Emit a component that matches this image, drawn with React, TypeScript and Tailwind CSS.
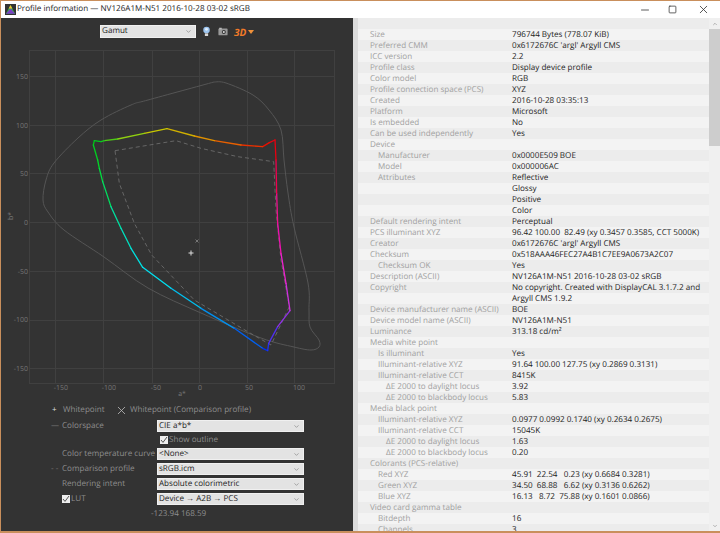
import { ChevronDown, Minus, Square, X } from "lucide-react";

type Row = { label?: string; indent?: 0 | 1 | 2; value?: string };

const rows: Row[] = [
  { label: "Size", value: "796744 Bytes (778.07 KiB)" },
  { label: "Preferred CMM", value: "0x6172676C 'argl' Argyll CMS" },
  { label: "ICC version", value: "2.2" },
  { label: "Profile class", value: "Display device profile" },
  { label: "Color model", value: "RGB" },
  { label: "Profile connection space (PCS)", value: "XYZ" },
  { label: "Created", value: "2016-10-28 03:35:13" },
  { label: "Platform", value: "Microsoft" },
  { label: "Is embedded", value: "No" },
  { label: "Can be used independently", value: "Yes" },
  { label: "Device" },
  { label: "Manufacturer", indent: 1, value: "0x0000E509 BOE" },
  { label: "Model", indent: 1, value: "0x000006AC" },
  { label: "Attributes", indent: 1, value: "Reflective" },
  { value: "Glossy" },
  { value: "Positive" },
  { value: "Color" },
  { label: "Default rendering intent", value: "Perceptual" },
  { label: "PCS illuminant XYZ", value: "96.42 100.00  82.49 (xy 0.3457 0.3585, CCT 5000K)" },
  { label: "Creator", value: "0x6172676C 'argl' Argyll CMS" },
  { label: "Checksum", value: "0x518AAA46FEC27A4B1C7EE9A0673A2C07" },
  { label: "Checksum OK", indent: 1, value: "Yes" },
  { label: "Description (ASCII)", value: "NV126A1M-N51 2016-10-28 03-02 sRGB" },
  { label: "Copyright", value: "No copyright. Created with DisplayCAL 3.1.7.2 and" },
  { value: "Argyll CMS 1.9.2" },
  { label: "Device manufacturer name (ASCII)", value: "BOE" },
  { label: "Device model name (ASCII)", value: "NV126A1M-N51" },
  { label: "Luminance", value: "313.18 cd/m²" },
  { label: "Media white point" },
  { label: "Is illuminant", indent: 1, value: "Yes" },
  { label: "Illuminant-relative XYZ", indent: 1, value: "91.64 100.00 127.75 (xy 0.2869 0.3131)" },
  { label: "Illuminant-relative CCT", indent: 1, value: "8415K" },
  { label: "ΔE 2000 to daylight locus", indent: 2, value: "3.92" },
  { label: "ΔE 2000 to blackbody locus", indent: 2, value: "5.83" },
  { label: "Media black point" },
  { label: "Illuminant-relative XYZ", indent: 1, value: "0.0977 0.0992 0.1740 (xy 0.2634 0.2675)" },
  { label: "Illuminant-relative CCT", indent: 1, value: "15045K" },
  { label: "ΔE 2000 to daylight locus", indent: 2, value: "1.63" },
  { label: "ΔE 2000 to blackbody locus", indent: 2, value: "0.20" },
  { label: "Colorants (PCS-relative)" },
  { label: "Red XYZ", indent: 1, value: "45.91  22.54   0.23 (xy 0.6684 0.3281)" },
  { label: "Green XYZ", indent: 1, value: "34.50  68.88   6.62 (xy 0.3136 0.6262)" },
  { label: "Blue XYZ", indent: 1, value: "16.13   8.72  75.88 (xy 0.1601 0.0866)" },
  { label: "Video card gamma table" },
  { label: "Bitdepth", indent: 1, value: "16" },
  { label: "Channels", indent: 1, value: "3" },
];

const W = 352;
const H = 359;
// chart coordinates below are window pixels, the svg starts at y 44
const oy = 44;

type Stop = [number, number, string];

// zoom coords of the gamut edge, from the crop at (60,110) 3x
const gamut: Stop[] = [
  [100, 92, "#00c818"],
  [97, 105, "#00d020"],
  [110, 150, "#00d828"],
  [115, 175, "#00e040"],
  [125, 215, "#00e060"],
  [150, 290, "#00e0a0"],
  [180, 355, "#00e0c0"],
  [210, 415, "#00e0e0"],
  [245, 472, "#00e0f0"],
  [330, 535, "#00c0f0"],
  [420, 595, "#0090f0"],
  [520, 655, "#0060f0"],
  [605, 715, "#0030f0"],
  [620, 722, "#2030f0"],
  [623, 700, "#5030f0"],
  [650, 650, "#9030e8"],
  [687, 602, "#d030e0"],
  [675, 520, "#f020d0"],
  [660, 430, "#f010b0"],
  [650, 340, "#f01090"],
  [647, 250, "#f00050"],
  [645, 150, "#e80010"],
  [642, 90, "#e80010"],
  [625, 98, "#e81000"],
  [605, 110, "#e83000"],
  [540, 105, "#e86000"],
  [460, 92, "#e09000"],
  [400, 78, "#d0b000"],
  [318, 56, "#c8c800"],
  [250, 70, "#90d010"],
  [170, 87, "#50c818"],
  [130, 92, "#18c820"],
  [120, 95, "#00c820"],
  [100, 92, "#00c818"],
];

const dashed = [
  [162, 122], [345, 92], [420, 115], [530, 140], [638, 155], [645, 300], [660, 450],
  [685, 590], [630, 705], [560, 665], [400, 570], [272, 435], [220, 340], [175, 220], [162, 122],
];

const outline = [
  [213, 82], [225, 83], [252, 95], [268, 110], [280, 130], [283, 160], [287, 193], [293, 227],
  [307, 283], [308, 310], [309, 327], [318, 340], [318, 347], [310, 350], [293, 347], [260, 338],
  [200, 313], [147, 288], [103, 257], [63, 230], [47, 212], [42, 200], [45, 180], [53, 163],
  [77, 138], [100, 120], [130, 105], [147, 100], [213, 82],
];

// catmull-rom through the traced points so the curve doesn't look faceted
function smooth(pts: number[][]) {
  let d = `M${pts[0][0]} ${pts[0][1] - oy}`;
  for (let i = 0; i < pts.length - 1; i++) {
    const p0 = pts[Math.max(i - 1, 0)];
    const p1 = pts[i];
    const p2 = pts[i + 1];
    const p3 = pts[Math.min(i + 2, pts.length - 1)];
    const c1x = p1[0] + (p2[0] - p0[0]) / 6;
    const c1y = p1[1] + (p2[1] - p0[1]) / 6 - oy;
    const c2x = p2[0] - (p3[0] - p1[0]) / 6;
    const c2y = p2[1] - (p3[1] - p1[1]) / 6 - oy;
    d += `C${c1x} ${c1y} ${c2x} ${c2y} ${p2[0]} ${p2[1] - oy}`;
  }
  return d;
}

const zx = (x: number) => 60 + x / 3;
const zy = (y: number) => 110 + y / 3 - oy;

const vGrid = [54, 102, 151, 198, 246, 293];
const hGrid = [76, 125, 173, 222, 271, 320, 368];
const xLabels = [
  ["-150", 60], ["-100", 108], ["-50", 155], ["0", 199], ["50", 248], ["100", 298],
] as const;
const yLabels = [
  ["150", 77], ["100", 126], ["50", 174], ["0", 223], ["-50", 272], ["-100", 320], ["-150", 369],
] as const;

function Select({ value, className }: { value: string; className: string }) {
  return (
    <div className={`flex items-center justify-between bg-[#e3e3e3] border border-[#f0f0f0] text-[#222] pl-[1px] pr-[3px] text-[8.1px] leading-none ${className}`}>
      <span>{value}</span>
      <ChevronDown className="w-[7px] h-[7px] text-[#777]" />
    </div>
  );
}

function Check() {
  return (
    <span className="w-[8px] h-[8px] bg-[#eee] flex items-center justify-center shrink-0">
      <svg viewBox="0 0 8 8" className="w-[8px] h-[8px]">
        <path d="M1 4l2 2.4L7 1" fill="none" stroke="#555" strokeWidth="1" />
      </svg>
    </span>
  );
}

function Chart() {
  return (
    <svg width={W} height={H} viewBox={`0 0 ${W} ${H}`} className="block" fontFamily="'Open Sans', sans-serif">
      <rect x="28.5" y={50.5 - oy} width="305" height="333" fill="none" stroke="#404040" />
      {vGrid.map((x) => (
        <line key={x} x1={x + 0.5} x2={x + 0.5} y1={50 - oy} y2={383 - oy} stroke="#404040" />
      ))}
      {hGrid.map((y) => (
        <line key={y} x1="28" x2="333" y1={y + 0.5 - oy} y2={y + 0.5 - oy} stroke="#404040" />
      ))}
      {xLabels.map(([t, x]) => (
        <text key={t} x={x} y={390 - oy} fontSize="7" fill="#777" textAnchor="middle">{t}</text>
      ))}
      {yLabels.map(([t, y]) => (
        <text key={t} x="27" y={y + 2 - oy} fontSize="7" fill="#777" textAnchor="end">{t}</text>
      ))}
      <text x="181" y={396 - oy} fontSize="7" fill="#777" textAnchor="middle">a*</text>
      <text x="0" y="0" fontSize="7" fill="#777" textAnchor="middle" transform={`translate(12 ${216 - oy}) rotate(-90)`}>b*</text>

      <path d={smooth(outline)} fill="none" stroke="#555555" strokeWidth="1" />
      <polyline
        points={dashed.map(([x, y]) => `${zx(x)},${zy(y)}`).join(" ")}
        fill="none"
        stroke="#666666"
        strokeWidth="1"
        strokeDasharray="4 3"
      />
      {gamut.slice(1).map(([x, y], i) => {
        const [px, py, c] = gamut[i];
        return (
          <line key={i} x1={zx(px)} y1={zy(py)} x2={zx(x)} y2={zy(y)} stroke={c} strokeWidth="1.3" strokeLinecap="round" />
        );
      })}
      <path d={`M187.5 ${253 - oy}h5M190 ${250.5 - oy}v5`} stroke="#ddd" strokeWidth="1" />
      <path d={`M194.5 ${239.5 - oy}l3 3M197.5 ${239.5 - oy}l-3 3`} stroke="#888" strokeWidth="0.8" />
    </svg>
  );
}

function Toolbar() {
  return (
    <div className="h-[26px] flex items-center pl-[99px] pt-[1px]">
      <Select value="Gamut" className="w-[96px] h-[13px]" />
      <svg viewBox="0 0 10 12" className="w-[9px] h-[11px] ml-[6px]">
        <circle cx="5" cy="4.2" r="3.6" fill="#9cc4ee" />
        <circle cx="5" cy="3.6" r="1.6" fill="#e4f0fb" />
        <rect x="3.2" y="8" width="3.6" height="3" fill="#d8d8d8" />
      </svg>
      <svg viewBox="0 0 12 10" className="w-[10px] h-[9px] ml-[7px]">
        <rect x="0.5" y="1.5" width="11" height="8" rx="1" fill="#9a9a9a" />
        <rect x="1.5" y="0.5" width="3" height="2" fill="#bbb" />
        <circle cx="7" cy="5.5" r="2.4" fill="#333" />
        <circle cx="7" cy="5.5" r="1.2" fill="#ddd" />
      </svg>
      <span className="ml-[6px] text-[10px] leading-none font-bold italic text-[#f07a28]">3D</span>
      <svg viewBox="0 0 6 4" className="w-[6px] h-[4px] ml-[2px]">
        <path d="M0 0h6L3 4z" fill="#f0913a" />
      </svg>
    </div>
  );
}

function Controls() {
  const label = "text-[#8e8e8e] w-[95px] shrink-0 leading-none whitespace-nowrap";
  return (
    <div className="text-[8.1px] pl-[50px]">
      <div className="flex items-center h-[12px] text-[#8e8e8e] mt-[1px]">
        <span className="text-[#ddd] w-[12px] pl-[1px]">+</span>
        <span className="w-[52px]">Whitepoint</span>
        <X className="w-[13px] h-[13px] mr-[2px] text-[#bbb]" strokeWidth={1.5} />
        <span>Whitepoint (Comparison profile)</span>
      </div>
      <div className="flex flex-col mt-[4px]">
        <div className="flex items-center h-[12px]">
          <span className="w-[11px] text-[#777] leading-none">—</span>
          <span className={label}>Colorspace</span>
          <Select value="CIE a*b*" className="w-[147px] h-[12px]" />
        </div>
        <div className="flex items-center h-[16px] pl-[109px] text-[#8e8e8e] gap-[1px]">
          <Check />
          <span className="leading-none">Show outline</span>
        </div>
        <div className="flex items-center h-[12px]">
          <span className="w-[11px]" />
          <span className={label}>Color temperature curve</span>
          <Select value="<None>" className="w-[147px] h-[12px]" />
        </div>
        <div className="flex items-center h-[12px] mt-[3px]">
          <span className="w-[11px] text-[#777] leading-none">- -</span>
          <span className={label}>Comparison profile</span>
          <Select value="sRGB.icm" className="w-[147px] h-[12px]" />
        </div>
        <div className="flex items-center h-[12px] mt-[3px]">
          <span className="w-[11px]" />
          <span className={label}>Rendering intent</span>
          <Select value="Absolute colorimetric" className="w-[147px] h-[12px]" />
        </div>
        <div className="flex items-center h-[12px] mt-[3px]">
          <span className="w-[11px]" />
          <span className="flex items-center gap-[1px] w-[95px] shrink-0 text-[#8e8e8e] leading-none">
            <Check />
            LUT
          </span>
          <Select value="Device → A2B → PCS" className="w-[147px] h-[12px]" />
        </div>
      </div>
      <div className="mt-[3px] pl-[100px] text-[#8e8e8e] leading-[12px]">-123.94 168.59</div>
    </div>
  );
}

export default function App() {
  return (
    <div className="w-[720px] h-[533px] overflow-hidden bg-white border-t border-l border-b-2 border-[#c98f5c] flex flex-col font-['Open_Sans',sans-serif] [text-rendering:geometricPrecision]">
      {/* Title bar */}
      <div className="h-[17px] shrink-0 flex items-center bg-white">
        <svg viewBox="0 0 12 12" className="w-[11px] h-[11px] ml-[4px] bg-[#333]">
          <polygon points="6,1 11,10.5 1,10.5" fill="#33b14a" />
          <polygon points="6,5 11,10.5 1,10.5" fill="#7a3fc4" />
          <polygon points="6,1 8,5 4,5" fill="#f2c230" />
        </svg>
        <span className="ml-[1px] text-[8.1px] leading-none text-[#222] whitespace-nowrap">
          Profile information — NV126A1M-N51 2016-10-28 03-02 sRGB
        </span>
        <div className="ml-auto flex items-center text-[#333] pr-[10px]">
          <Minus className="w-[12px] h-[12px]" strokeWidth={1.6} />
          <Square className="w-[9px] h-[9px] ml-[17px]" strokeWidth={2} />
          <X className="w-[13px] h-[13px] ml-[20px]" strokeWidth={1.5} />
        </div>
      </div>

      <div className="flex-1 flex min-h-0">
        {/* Graph side */}
        <div className="w-[352px] shrink-0 bg-[#333333] flex flex-col">
          <Toolbar />
          <Chart />
          <Controls />
        </div>
        <div className="w-[5px] shrink-0 bg-[#dcdcdc]" />

        {/* Info table */}
        <div className="flex-1 min-w-0 flex bg-[#f0f0f0]">
          <div className="flex-1 overflow-hidden text-[8.1px] leading-[12px]">
            <div className="h-[11px] bg-[#ececec]" />
            {rows.map((r, i) => (
              <div key={i} className={`h-[11px] flex whitespace-pre ${i % 2 === 0 ? "bg-[#f3f3f3]" : "bg-[#ececec]"}`}>
                <span className={`w-[154px] shrink-0 text-[#a0a0a0] ${r.indent === 2 ? "pl-[28px]" : r.indent === 1 ? "pl-[20px]" : "pl-[12px]"}`}>
                  {r.label}
                </span>
                <span className="text-[#1c1c1c]">{r.value}</span>
              </div>
            ))}
          </div>
          <div className="w-[11px] shrink-0 bg-[#f0f0f0] flex flex-col">
            <div className="h-[11px] flex items-center justify-center">
              <ChevronDown className="w-[6px] h-[6px] rotate-180 text-[#777]" />
            </div>
            <div className="h-[117px] bg-[#cdcdcd]" />
            <div className="mt-auto h-[11px] flex items-center justify-center">
              <ChevronDown className="w-[6px] h-[6px] text-[#777]" />
            </div>
          </div>
        </div>
      </div>
    </div>
  );
}
